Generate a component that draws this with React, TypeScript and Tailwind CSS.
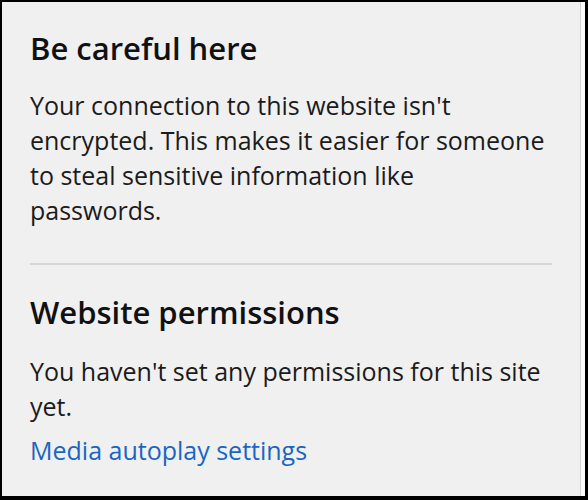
export default function App() {
  return (
    <div className="w-[588px] h-[500px] bg-black p-[2px] pr-[3px] pb-[4px]">
      <div className="flex h-full bg-white">
        <div
          className="flex-1 bg-[#f0f0f0] border-r border-[#d4d4d4] pl-[28px] pr-[28px] pt-[26px]"
          style={{ fontFamily: '"Open Sans", "Noto Sans", sans-serif' }}
        >
          <h2 className="text-[31px] leading-[40px] font-semibold text-[#111]">Be careful here</h2>
          <p className="mt-[20px] max-w-[518px] text-[25px] leading-[35px] text-[#1b1b1b]">
            Your connection to this website isn't encrypted. This makes it easier for someone to steal
            sensitive information like passwords.
          </p>
          <div className="mt-[35px] h-[2px] bg-[#d6d6d6]" />
          <h2 className="mt-[27px] text-[31px] leading-[40px] font-semibold text-[#111]">
            Website permissions
          </h2>
          <p className="mt-[22px] max-w-[518px] text-[25px] leading-[35px] text-[#1b1b1b]">
            You haven't set any permissions for this site yet.
          </p>
          <a className="block mt-[9px] text-[25px] leading-[35px] text-[#1a66c2]">Media autoplay settings</a>
        </div>
        <div className="w-[4px]" />
      </div>
    </div>
  )
}
